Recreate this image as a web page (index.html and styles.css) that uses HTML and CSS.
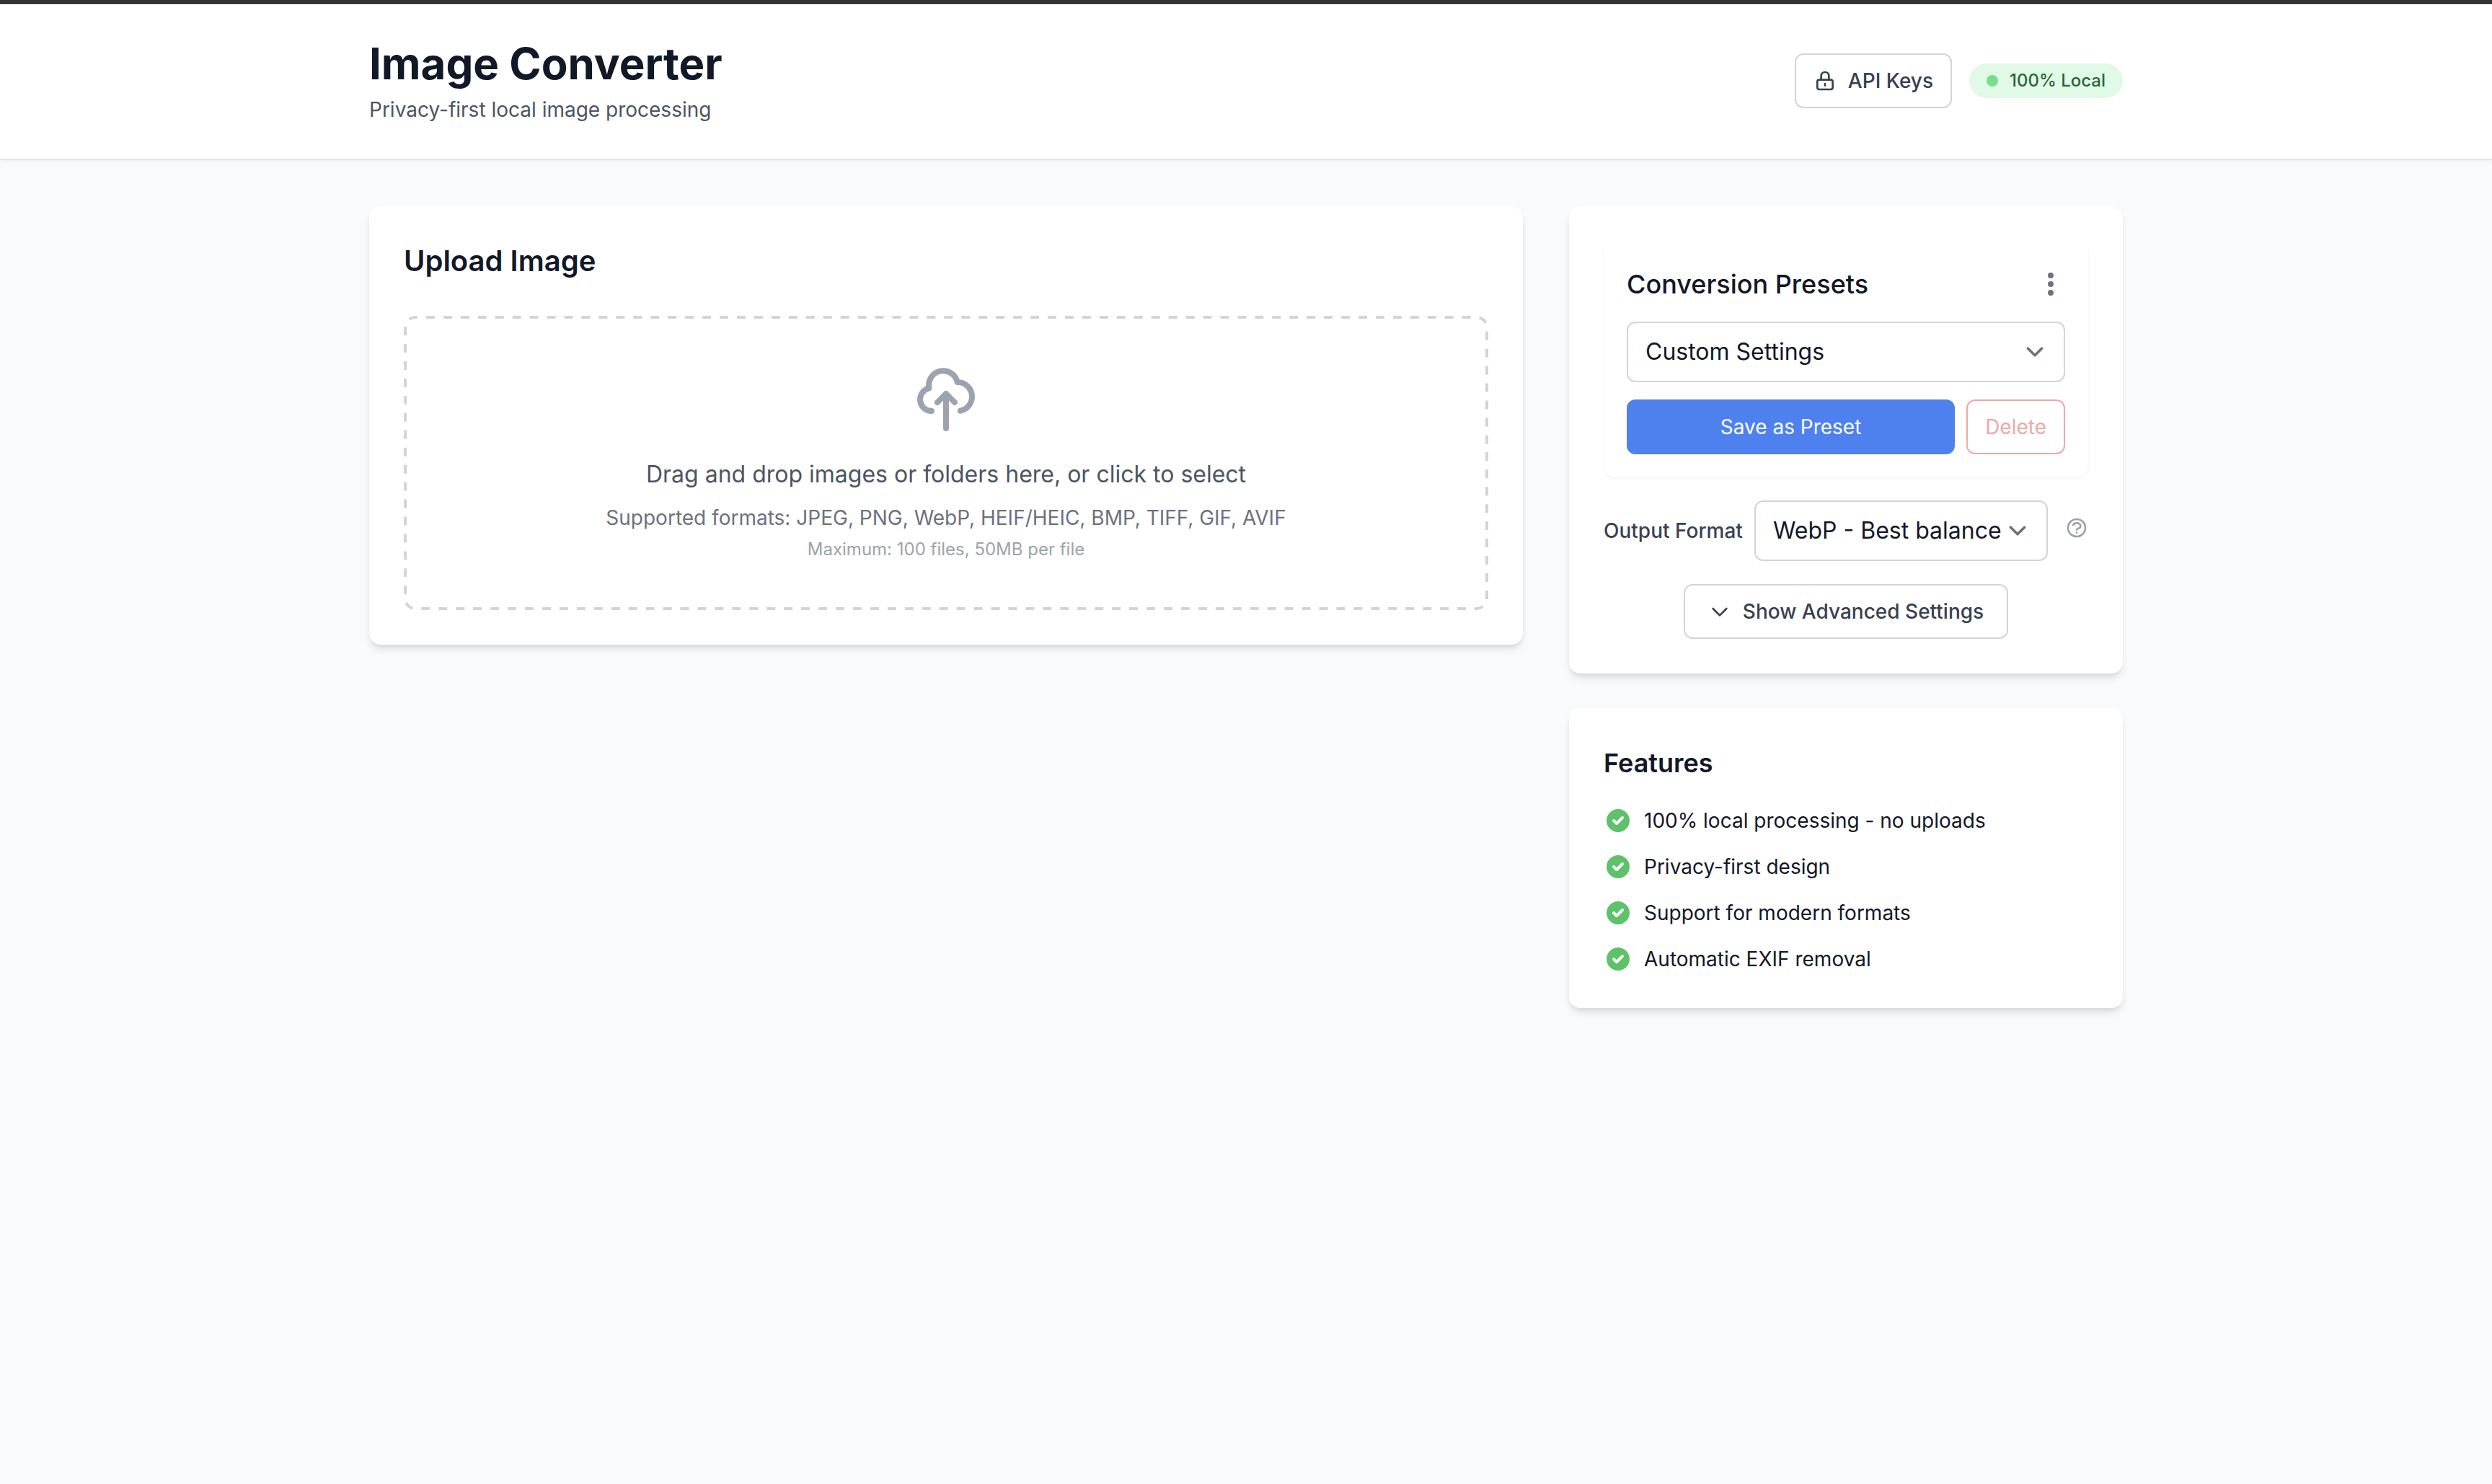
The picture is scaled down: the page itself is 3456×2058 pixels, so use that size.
FILE: index.html
```html
<!DOCTYPE html>
<html lang="en">
<head>
<meta charset="utf-8">
<meta name="viewport" content="width=device-width, initial-scale=1">
<title>Image Converter</title>
<link rel="stylesheet" href="styles.css">
</head>
<body>
<div class="top-strip"></div>
<header class="site-header">
  <div class="container header-row">
    <div>
      <h1 class="site-title">Image Converter</h1>
      <p class="site-tagline">Privacy-first local image processing</p>
    </div>
    <div class="header-actions">
      <button type="button" class="btn btn-outline btn-medium btn-keys">
        <svg class="icon-sm" viewBox="0 0 24 24" fill="none" stroke="currentColor" stroke-width="2" stroke-linecap="round" stroke-linejoin="round" aria-hidden="true"><path d="M12 15v2m-6 4h12a2 2 0 002-2v-6a2 2 0 00-2-2H6a2 2 0 00-2 2v6a2 2 0 002 2zm10-10V7a4 4 0 00-8 0v4h8z"/></svg>
        API Keys
      </button>
      <div class="badge"><span class="badge-dot"></span>100% Local</div>
    </div>
  </div>
</header>
<main class="container layout">
  <section class="card upload">
    <h2 class="upload-title">Upload Image</h2>
    <button type="button" class="dropzone">
      <svg class="drop-outline" aria-hidden="true"><rect x="2" y="2" rx="14" pathLength="3792"/></svg>
      <svg class="icon-cloud" viewBox="0 0 24 24" fill="none" stroke="currentColor" stroke-width="2" stroke-linecap="round" stroke-linejoin="round" aria-hidden="true"><path d="M7 16a4 4 0 01-.88-7.903A5 5 0 1115.9 6L16 6a5 5 0 011 9.9M15 13l-3-3m0 0l-3 3m3-3v12"/></svg>
      <span class="drop-lead">Drag and drop images or folders here, or click to select</span>
      <span class="drop-formats">Supported formats: JPEG, PNG, WebP, HEIF/HEIC, BMP, TIFF, GIF, AVIF</span>
      <span class="drop-limit">Maximum: 100 files, 50MB per file</span>
    </button>
  </section>
  <div class="sidebar">
    <section class="card settings">
      <div class="presets">
        <div class="presets-head">
          <h3 class="presets-title" id="presets-title">Conversion Presets</h3>
          <button type="button" class="icon-btn menu-btn" aria-label="Preset options">
            <svg class="icon-md" viewBox="0 0 20 20" fill="currentColor" aria-hidden="true"><path d="M10 6a2 2 0 110-4 2 2 0 010 4zM10 12a2 2 0 110-4 2 2 0 010 4zM10 18a2 2 0 110-4 2 2 0 010 4z"/></svg>
          </button>
        </div>
        <div class="select-wrap">
          <select class="select" aria-labelledby="presets-title"><option>Custom Settings</option></select>
          <svg class="select-arrow" viewBox="0 0 20 20" fill="none" stroke="currentColor" stroke-width="1.5" stroke-linecap="round" stroke-linejoin="round" aria-hidden="true"><path d="M6 8l4 4 4-4"/></svg>
        </div>
        <div class="presets-actions">
          <button type="button" class="btn btn-primary">Save as Preset</button>
          <button type="button" class="btn btn-danger">Delete</button>
        </div>
      </div>
      <div class="format-row">
        <label class="format-label" for="output-format">Output Format</label>
        <div class="select-wrap format-select">
          <select class="select" id="output-format"><option>WebP - Best balance</option></select>
          <svg class="select-arrow" viewBox="0 0 20 20" fill="none" stroke="currentColor" stroke-width="1.5" stroke-linecap="round" stroke-linejoin="round" aria-hidden="true"><path d="M6 8l4 4 4-4"/></svg>
        </div>
        <button type="button" class="icon-btn help-btn" aria-label="About output formats">
          <svg class="icon-sm" viewBox="0 0 24 24" fill="none" stroke="currentColor" stroke-width="2" stroke-linecap="round" stroke-linejoin="round" aria-hidden="true"><path d="M8.228 9c.549-1.165 2.03-2 3.772-2 2.21 0 4 1.343 4 3 0 1.4-1.278 2.575-3.006 2.907-.542.104-.994.54-.994 1.093m0 3h.01M21 12a9 9 0 11-18 0 9 9 0 0118 0z"/></svg>
        </button>
      </div>
      <button type="button" class="btn btn-outline btn-medium btn-advanced">
        <svg class="icon-sm" viewBox="0 0 24 24" fill="none" stroke="currentColor" stroke-width="2" stroke-linecap="round" stroke-linejoin="round" aria-hidden="true"><path d="M19 9l-7 7-7-7"/></svg>
        Show Advanced Settings
      </button>
    </section>
    <section class="card features">
      <h3 class="features-title">Features</h3>
      <ul class="feature-list">
        <li class="feature"><svg class="icon-md icon-check" viewBox="0 0 20 20" fill="currentColor" aria-hidden="true"><path fill-rule="evenodd" d="M10 18a8 8 0 100-16 8 8 0 000 16zm3.707-9.293a1 1 0 00-1.414-1.414L9 10.586 7.707 9.293a1 1 0 00-1.414 1.414l2 2a1 1 0 001.414 0l4-4z"/></svg>100% local processing - no uploads</li>
        <li class="feature"><svg class="icon-md icon-check" viewBox="0 0 20 20" fill="currentColor" aria-hidden="true"><path fill-rule="evenodd" d="M10 18a8 8 0 100-16 8 8 0 000 16zm3.707-9.293a1 1 0 00-1.414-1.414L9 10.586 7.707 9.293a1 1 0 00-1.414 1.414l2 2a1 1 0 001.414 0l4-4z"/></svg>Privacy-first design</li>
        <li class="feature"><svg class="icon-md icon-check" viewBox="0 0 20 20" fill="currentColor" aria-hidden="true"><path fill-rule="evenodd" d="M10 18a8 8 0 100-16 8 8 0 000 16zm3.707-9.293a1 1 0 00-1.414-1.414L9 10.586 7.707 9.293a1 1 0 00-1.414 1.414l2 2a1 1 0 001.414 0l4-4z"/></svg>Support for modern formats</li>
        <li class="feature"><svg class="icon-md icon-check" viewBox="0 0 20 20" fill="currentColor" aria-hidden="true"><path fill-rule="evenodd" d="M10 18a8 8 0 100-16 8 8 0 000 16zm3.707-9.293a1 1 0 00-1.414-1.414L9 10.586 7.707 9.293a1 1 0 00-1.414 1.414l2 2a1 1 0 001.414 0l4-4z"/></svg>Automatic EXIF removal</li>
      </ul>
    </section>
  </div>
</main>
</body>
</html>
```
FILE: styles.css
```css
*, *::before, *::after { box-sizing: border-box; }

body {
  margin: 0;
  min-height: 100vh;
  background: #f9fafc;
  color: #111827;
  font-family: Inter, "Liberation Sans", sans-serif;
  font-size: 32px;
  line-height: 48px;
}

h1, h2, h3, p, ul { margin: 0; padding: 0; }
svg { display: block; flex-shrink: 0; }
button, select { font-family: inherit; margin: 0; cursor: pointer; }

.top-strip {
  height: 6px;
  background: #333333;
  border-bottom: 1px solid #a0a0a0;
  box-shadow: inset 0 -1px 0 #000000;
}

.container {
  max-width: 2560px;
  margin: 0 auto;
  padding-left: 64px;
  padding-right: 64px;
}

/* Header */
.site-header {
  background: #ffffff;
  border-bottom: 2px solid #e5e7eb;
  box-shadow: 0 2px 4px rgba(0, 0, 0, 0.05);
}
.header-row {
  display: flex;
  align-items: center;
  justify-content: space-between;
  padding-top: 46px;
  padding-bottom: 48px;
}
.site-title { font-size: 60px; line-height: 72px; font-weight: 700; }
.site-tagline { margin-top: 8px; font-size: 28px; line-height: 40px; color: #4b5563; }
.header-actions { display: flex; align-items: center; gap: 24px; }

.badge {
  display: flex;
  align-items: center;
  gap: 16px;
  padding: 8px 24px;
  border-radius: 24px;
  background: #e1fae8;
  color: #2e6339;
  font-size: 24px;
  line-height: 32px;
  font-weight: 500;
}
.badge-dot { width: 16px; height: 16px; border-radius: 50%; background: #79dd8b; }

/* Buttons */
.btn {
  display: inline-flex;
  align-items: center;
  justify-content: center;
  gap: 16px;
  padding: 16px 24px;
  border: 2px solid transparent;
  border-radius: 12px;
  background: #ffffff;
  font-size: 28px;
  line-height: 40px;
  white-space: nowrap;
}
.btn-outline { border-color: #d1d5db; color: #374151; }
.btn-medium { font-weight: 500; }
.btn-primary { flex: 1; border-color: #4f81ee; background: #4f81ee; color: #ffffff; }
.btn-danger { border-color: #f0a8a7; color: #f0a8a7; }
.btn-advanced { align-self: center; padding: 16px 32px; }
.icon-btn { padding: 0; border: 0; background: none; }

.icon-sm { width: 32px; height: 32px; }
.icon-md { width: 40px; height: 40px; }

/* Page grid */
.layout {
  display: grid;
  grid-template-columns: repeat(3, minmax(0, 1fr));
  gap: 64px;
  align-items: start;
  padding-top: 64px;
  padding-bottom: 64px;
}
.upload { grid-column: span 2; }
.sidebar { display: flex; flex-direction: column; gap: 48px; }

.card {
  padding: 48px;
  border-radius: 16px;
  background: #ffffff;
  box-shadow: 0 8px 12px -2px rgba(0, 0, 0, 0.1), 0 4px 8px -4px rgba(0, 0, 0, 0.1);
}

/* Upload */
.upload-title { margin-bottom: 48px; font-size: 40px; line-height: 56px; font-weight: 600; }
.dropzone {
  position: relative;
  display: flex;
  flex-direction: column;
  align-items: center;
  width: 100%;
  padding: 68px;
  border: 0;
  border-radius: 16px;
  background: none;
}
/* Dashed outline laid over the edge of the drop area */
.drop-outline {
  position: absolute;
  inset: 0;
  width: 100%;
  height: 100%;
  pointer-events: none;
}
.drop-outline rect {
  width: calc(100% - 4px);
  height: calc(100% - 4px);
  fill: none;
  stroke: #d1d5db;
  stroke-width: 4px;
  stroke-dasharray: 12 12;
  stroke-dashoffset: 9;
}
.icon-cloud { width: 96px; height: 96px; color: #9ca3af; }
.drop-lead { margin-top: 32px; font-size: 32px; line-height: 48px; color: #4b5563; }
.drop-formats { margin-top: 16px; font-size: 28px; line-height: 40px; color: #6b7280; }
.drop-limit { margin-top: 8px; font-size: 24px; line-height: 32px; color: #9ca3af; }

/* Settings */
.settings { display: flex; flex-direction: column; gap: 32px; }
.presets {
  display: flex;
  flex-direction: column;
  gap: 24px;
  padding: 32px;
  border-radius: 16px;
  box-shadow: 0 2px 4px rgba(0, 0, 0, 0.05);
}
.presets-head { display: flex; align-items: center; justify-content: space-between; }
.presets-title { font-size: 36px; line-height: 56px; font-weight: 500; }
.menu-btn { color: #6b7280; }
.presets-actions { display: flex; gap: 16px; }

.select-wrap { display: grid; align-items: center; }
.select-wrap > * { grid-area: 1 / 1; }
.select {
  appearance: none;
  width: 100%;
  min-width: 0;
  height: 84px;
  padding: 16px 24px;
  border: 2px solid #d1d5db;
  border-radius: 12px;
  background: #ffffff;
  color: #111827;
  font-size: 32px;
  line-height: 48px;
}
.select-arrow {
  justify-self: end;
  width: 48px;
  height: 48px;
  margin-right: 18px;
  color: #6b7280;
  pointer-events: none;
}

.format-row { display: flex; align-items: center; }
.format-label { margin-right: 16px; font-size: 28px; line-height: 40px; font-weight: 500; color: #374151; white-space: nowrap; }
.format-select { flex: 1; min-width: 0; }
.help-btn { display: flex; align-items: flex-start; height: 40px; margin-left: 24px; color: #9ca3af; }

/* Features */
.features-title { margin-bottom: 32px; font-size: 36px; line-height: 56px; font-weight: 600; }
.feature-list { display: flex; flex-direction: column; gap: 24px; list-style: none; }
.feature { display: flex; align-items: center; gap: 16px; font-size: 28px; line-height: 40px; }
.icon-check { color: #5dc269; }
```
